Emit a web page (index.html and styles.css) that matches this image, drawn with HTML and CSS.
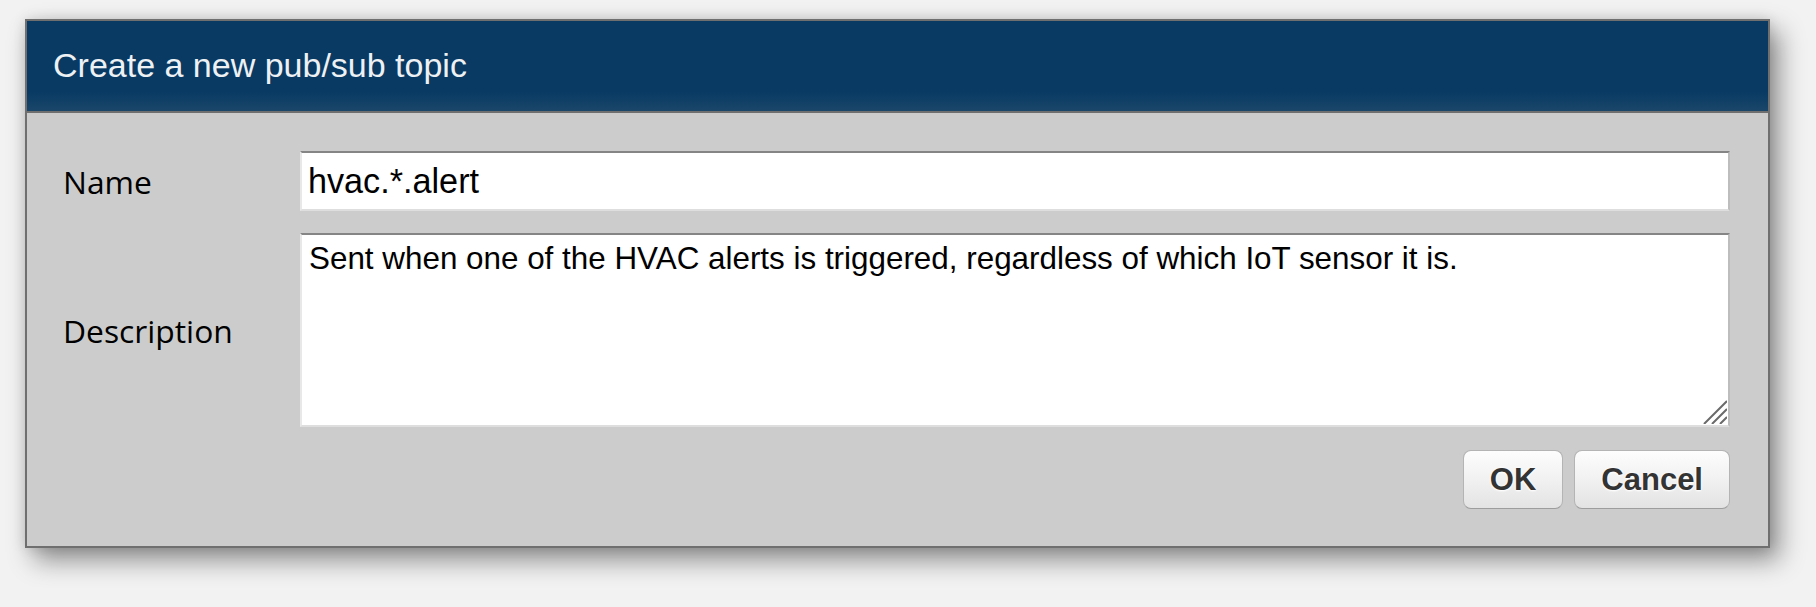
FILE: index.html
```html
<!DOCTYPE html>
<html lang="en">
<head>
<meta charset="utf-8">
<title>Create a new pub/sub topic</title>
<link rel="stylesheet" href="styles.css">
</head>
<body>
  <div class="dialog">
    <div class="dialog-header">
      <span class="dialog-title">Create a new pub/sub topic</span>
    </div>
    <div class="dialog-body">
      <div class="form-grid">
        <label class="field-label" for="name">Name</label>
        <input class="field-input" id="name" type="text" value="hvac.*.alert">
        <label class="field-label" for="desc">Description</label>
        <div class="textarea-wrap">
          <textarea class="field-textarea" id="desc">Sent when one of the HVAC alerts is triggered, regardless of which IoT sensor it is.</textarea>
          <svg class="resize-grip" width="24" height="24" viewBox="0 0 24 24" aria-hidden="true">
            <path d="M1 24 L24 1 M9 24 L24 9 M17 24 L24 17" stroke="#6a6a6a" stroke-width="2" fill="none"/>
          </svg>
        </div>
      </div>
      <div class="button-row">
        <button class="btn" type="button">OK</button>
        <button class="btn" type="button">Cancel</button>
      </div>
    </div>
  </div>
</body>
</html>
```

FILE: styles.css
```css
html {
  min-height: 100%;
  background: #f2f2f2;
}

html, body {
  margin: 0;
  padding: 0;
}

body {
  background: #f2f2f2;
  padding: 19px 46px 40px 25px;
  font-family: "Liberation Sans", Arial, sans-serif;
}

.dialog {
  box-sizing: border-box;
  width: 1745px;
  border: 2px solid #6f6f6f;
  background: #cccccc;
  box-shadow: 9px 12px 24px rgba(0, 0, 0, 0.42), 0 0 12px rgba(0, 0, 0, 0.12);
}

.dialog-header {
  box-sizing: border-box;
  height: 92px;
  padding: 0 0 0 26px;
  display: flex;
  align-items: center;
  background: linear-gradient(to bottom, #083a63 0%, #083a63 78%, #1a4669 100%);
  border-bottom: 2px solid #6f6f6f;
}

.dialog-title {
  font-size: 34px;
  color: #eef1f4;
  position: relative;
  top: -1px;
}

.dialog-body {
  padding: 38px 38px 37px 36px;
}

.form-grid {
  display: grid;
  grid-template-columns: 237px 1fr;
  row-gap: 22px;
  align-items: center;
}

.field-label {
  font-family: "Open Sans", "Noto Sans", sans-serif;
  font-size: 31.8px;
  color: #000;
}

.field-input,
.field-textarea {
  box-sizing: border-box;
  margin: 0;
  width: 100%;
  background: #fff;
  color: #000;
  font-family: "Liberation Sans", Arial, sans-serif;
  border-style: solid;
  border-width: 2px;
  border-color: #858585 #bdbdbd #dedede #e8e8e8;
  outline: none;
}

.field-input {
  height: 60px;
  font-size: 34.2px;
  padding: 0 6px;
}

.textarea-wrap {
  position: relative;
}

.field-textarea {
  height: 194px;
  font-size: 31.4px;
  padding: 6px 7px;
  resize: none;
  display: block;
}

.resize-grip {
  position: absolute;
  right: 3px;
  bottom: 3px;
}

.button-row {
  display: flex;
  justify-content: flex-end;
  gap: 11px;
  margin-top: 23px;
}

.btn {
  box-sizing: border-box;
  height: 59px;
  padding: 0 26px;
  margin: 0;
  border: 1px solid #b4b4b4;
  border-bottom-color: #9d9d9d;
  border-radius: 8px;
  background: linear-gradient(to bottom, #fdfdfd 0%, #f1f1f1 50%, #e3e3e3 100%);
  font-family: "Liberation Sans", Arial, sans-serif;
  font-weight: bold;
  font-size: 31px;
  color: #333;
  text-shadow: 0 0 3px #fff, 0 1px 2px #fff;
  cursor: pointer;
}
```
